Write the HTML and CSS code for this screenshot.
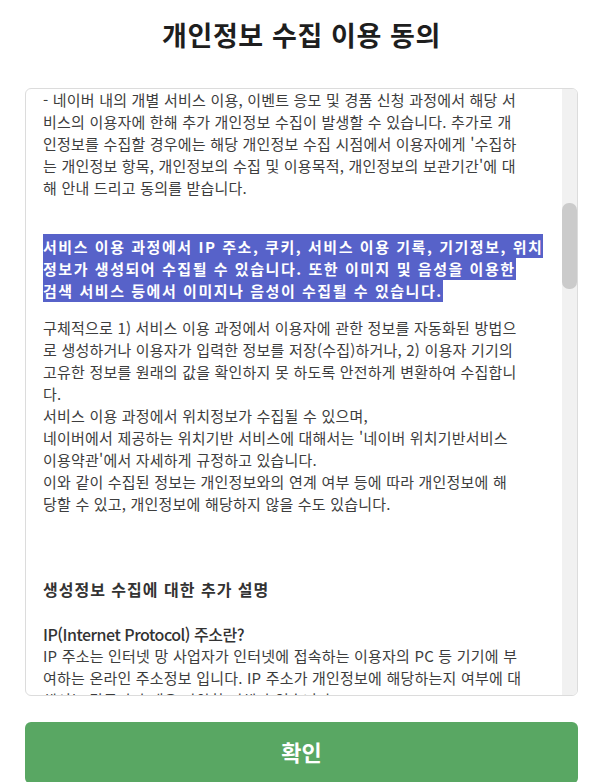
FILE: index.html
```html
<!DOCTYPE html>
<html lang="ko">
<head>
<meta charset="utf-8">
<title>개인정보 수집 이용 동의</title>
<link rel="stylesheet" href="styles.css">
</head>
<body>
<div class="page">
  <h1 class="title">개인정보 수집 이용 동의</h1>
  <div class="terms">
    <div class="terms-content">
      <p class="para first">- 네이버 내의 개별 서비스 이용, 이벤트 응모 및 경품 신청 과정에서 해당 서<br>비스의 이용자에 한해 추가 개인정보 수집이 발생할 수 있습니다. 추가로 개<br>인정보를 수집할 경우에는 해당 개인정보 수집 시점에서 이용자에게 '수집하<br>는 개인정보 항목, 개인정보의 수집 및 이용목적, 개인정보의 보관기간'에 대<br>해 안내 드리고 동의를 받습니다.</p>
      <p class="para highlight"><span class="mark">서비스 이용 과정에서 IP 주소, 쿠키, 서비스 이용 기록, 기기정보, 위치<br>정보가 생성되어 수집될 수 있습니다. 또한 이미지 및 음성을 이용한<br>검색 서비스 등에서 이미지나 음성이 수집될 수 있습니다.</span></p>
      <p class="para detail">구체적으로 1) 서비스 이용 과정에서 이용자에 관한 정보를 자동화된 방법으<br>로 생성하거나 이용자가 입력한 정보를 저장(수집)하거나, 2) 이용자 기기의<br>고유한 정보를 원래의 값을 확인하지 못 하도록 안전하게 변환하여 수집합니<br>다.<br>서비스 이용 과정에서 위치정보가 수집될 수 있으며,<br>네이버에서 제공하는 위치기반 서비스에 대해서는 '네이버 위치기반서비스<br>이용약관'에서 자세하게 규정하고 있습니다.<br>이와 같이 수집된 정보는 개인정보와의 연계 여부 등에 따라 개인정보에 해<br>당할 수 있고, 개인정보에 해당하지 않을 수도 있습니다.</p>
      <h2 class="sub-heading">생성정보 수집에 대한 추가 설명</h2>
      <h3 class="term-title">IP(Internet Protocol) 주소란?</h3>
      <p class="para">IP 주소는 인터넷 망 사업자가 인터넷에 접속하는 이용자의 PC 등 기기에 부<br>여하는 온라인 주소정보 입니다. IP 주소가 개인정보에 해당하는지 여부에 대<br>해서는 각국마다 매우 다양한 견해가 있습니다.</p>
    </div>
    <div class="scrollbar"><div class="thumb"></div></div>
  </div>
  <button class="confirm" type="button">확인</button>
</div>
</body>
</html>
```
FILE: styles.css
```css
html, body {
  margin: 0;
  padding: 0;
  background: #ffffff;
}
body {
  font-family: "Noto Sans CJK KR", "Noto Sans", sans-serif;
  color: #3d3d3d;
}
.page {
  width: 553px;
  margin-left: 25px;
  display: flex;
  flex-direction: column;
}
.title {
  margin: 0;
  height: 70px;
  line-height: 70px;
  font-size: 27px;
  font-weight: 700;
  color: #1e1e1e;
  text-align: center;
  letter-spacing: 0.6px;
}
.terms {
  margin-top: 18px;
  height: 608px;
  border: 1px solid #dcdcdc;
  border-radius: 6px;
  display: flex;
  overflow: hidden;
  box-sizing: border-box;
}
.terms-content {
  flex: 1;
  overflow: hidden;
  padding: 0 0 0 17px;
  font-size: 15px;
  line-height: 22px;
  letter-spacing: 0.2px;
  white-space: nowrap;
}
.para {
  margin: 0;
}
.first {
  margin-top: 0;
}
.highlight {
  margin-top: 37px;
  font-weight: 700;
  letter-spacing: 1.55px;
}
.mark {
  background: #5762c9;
  color: #ffffff;
  padding: 2px 0 1px;
}
.detail {
  margin-top: 15px;
}
.sub-heading {
  margin: 63px 0 0;
  font-size: 16px;
  line-height: 22px;
  font-weight: 700;
  letter-spacing: 1px;
  color: #333333;
}
.term-title {
  margin: 23px 0 0;
  font-size: 16px;
  line-height: 22px;
  font-weight: 500;
  letter-spacing: -0.5px;
  color: #333333;
}
.scrollbar {
  width: 15px;
  flex: none;
  background: #f1f1f1;
}
.thumb {
  margin-top: 114px;
  height: 86px;
  border-radius: 7px;
  background: #cbcbcb;
}
.confirm {
  margin-top: 26px;
  height: 62px;
  border: none;
  border-radius: 6px;
  background: #59a763;
  color: #ffffff;
  font-family: "Noto Sans CJK KR", "Noto Sans", sans-serif;
  font-size: 22px;
  font-weight: 700;
  padding: 0 0 4px;
}
```
